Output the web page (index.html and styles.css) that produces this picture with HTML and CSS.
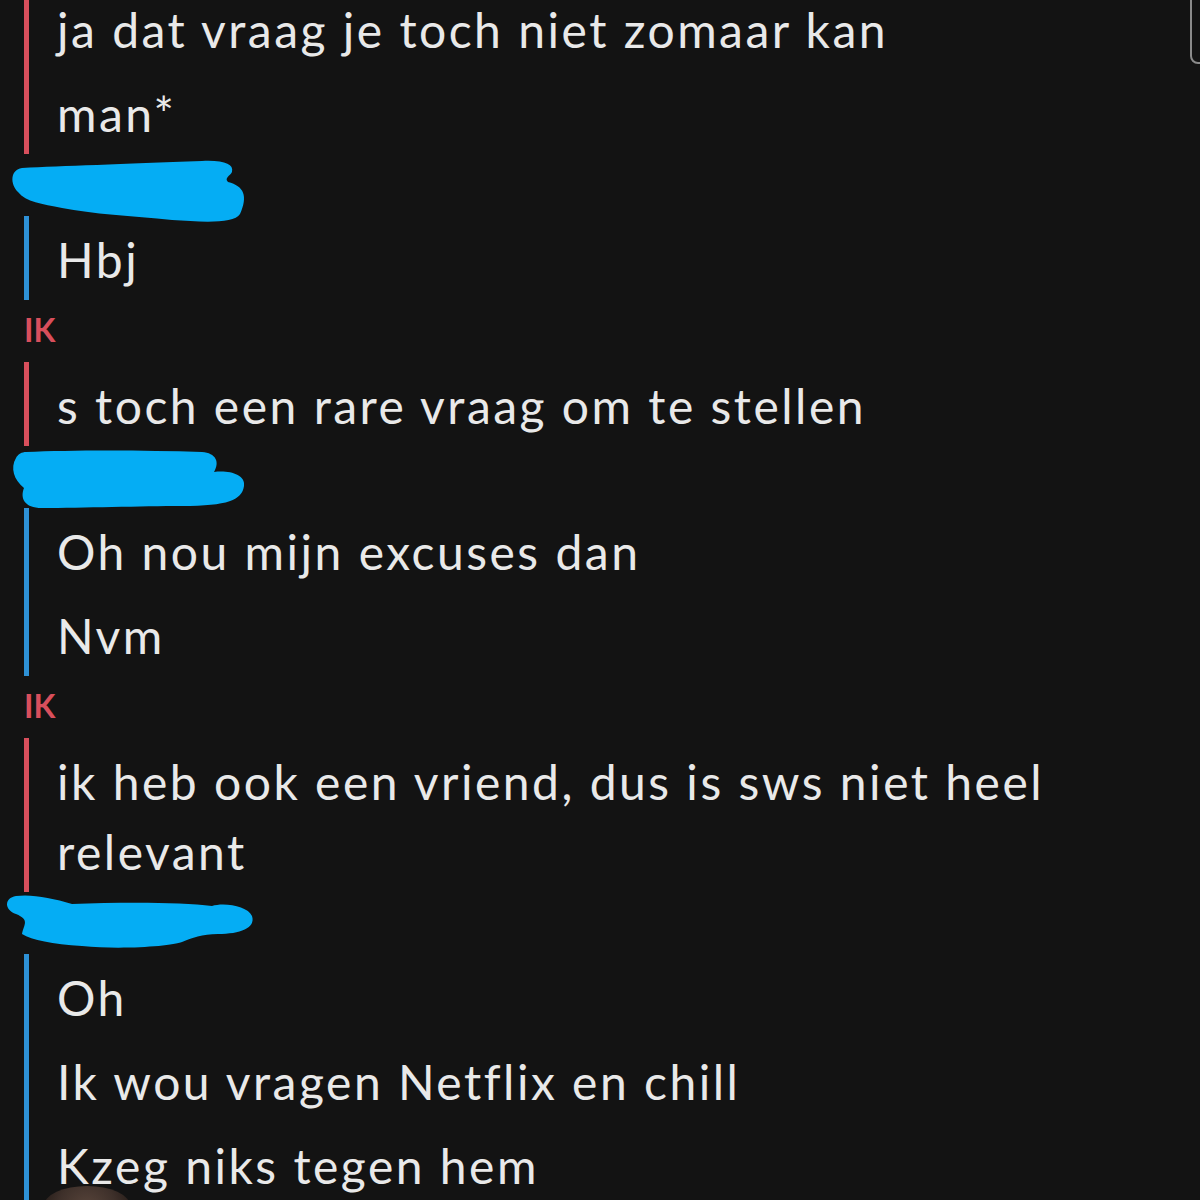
FILE: index.html
```html
<!DOCTYPE html>
<html>

<head>
  <title>Chat</title>
  <link rel="stylesheet" href="styles.css">
</head>

<body>
  <div class="scroll-thumb"></div>

  <div class="chat">
    <div class="msgs mine">
      <p class="msg">ja dat vraag je toch niet zomaar kan</p>
      <p class="msg">man*</p>
    </div>

    <div class="sender hidden-name">
      <svg class="scribble" width="260" height="72" viewBox="0 0 260 72">
        <path d="M20 12 C60 10 120 8 200 5 C222 4 232 8 230 16 C228 20 222 22 226 26 C242 30 246 40 238 58 C232 68 200 66 170 64 C130 60 90 58 60 52 C40 48 24 46 16 36 C8 28 8 14 20 12 Z" />
      </svg>
    </div>

    <div class="msgs theirs">
      <p class="msg">Hbj</p>
    </div>

    <div class="sender me-label">IK</div>

    <div class="msgs mine">
      <p class="msg">s toch een rare vraag om te stellen</p>
    </div>

    <div class="sender hidden-name">
      <svg class="scribble" width="260" height="72" viewBox="0 0 260 72">
        <path d="M24 4 C70 2 140 2 200 4 C214 5 218 14 212 24 C226 22 244 26 242 38 C240 52 226 58 180 58 C140 58 80 60 40 60 C22 60 18 50 22 40 C12 32 8 20 14 10 C16 6 20 4 24 4 Z" />
      </svg>
    </div>

    <div class="msgs theirs">
      <p class="msg">Oh nou mijn excuses dan</p>
      <p class="msg">Nvm</p>
    </div>

    <div class="sender me-label">IK</div>

    <div class="msgs mine">
      <p class="msg">ik heb ook een vriend, dus is sws niet heel relevant</p>
    </div>

    <div class="sender hidden-name">
      <svg class="scribble" width="260" height="72" viewBox="0 0 260 72">
        <path d="M14 2 C30 0 50 4 70 10 C120 8 180 8 210 12 C222 8 246 12 250 22 C254 34 238 40 216 40 C200 40 190 44 180 48 C170 52 120 56 80 52 C50 50 30 46 20 40 C22 30 28 26 14 20 C2 16 2 4 14 2 Z" />
      </svg>
    </div>

    <div class="msgs theirs">
      <p class="msg">Oh</p>
      <p class="msg">Ik wou vragen Netflix en chill</p>
      <p class="msg">Kzeg niks tegen hem</p>
    </div>
  </div>

  <div class="avatar-peek"></div>
</body>

</html>
```

FILE: styles.css
```css
html, body {
    margin: 0;
    padding: 0;
    background-color: #131313;
    overflow: hidden;
}
body {
    height: 1200px;
    position: relative;
    font-family: "Lato", "Noto Sans", sans-serif;
    color: #e9e9e9;
}
.chat {
    margin-top: -14px;
    padding-right: 40px;
}
.msgs {
    margin-left: 24px;
    padding-left: 28px;
    border-left: 5px solid;
}
.msgs.mine {
    border-left-color: #d84f5c;
}
.msgs.theirs {
    border-left-color: #2e91d6;
}
.msg {
    margin: 0;
    padding: 9px 0 5px 0;
    font-size: 48px;
    line-height: 70px;
    letter-spacing: 2.5px;
}
.sender {
    height: 62px;
    position: relative;
}
.me-label {
    box-sizing: border-box;
    padding: 13px 0 0 24px;
    font-size: 32px;
    line-height: 34px;
    font-weight: 700;
    color: #d84f5c;
}
.scribble {
    position: absolute;
    left: 2px;
    top: 2px;
    fill: #05adf4;
}
.scroll-thumb {
    position: absolute;
    top: -10px;
    right: -8px;
    width: 14px;
    height: 70px;
    border: 2px solid #8a8a8a;
    border-radius: 8px;
}
.avatar-peek {
    position: absolute;
    left: 44px;
    top: 1186px;
    width: 86px;
    height: 40px;
    border-radius: 50%;
    background: radial-gradient(circle at 50% 60%, #5a463c 0%, #3e302a 60%, #231a16 100%);
}
```
